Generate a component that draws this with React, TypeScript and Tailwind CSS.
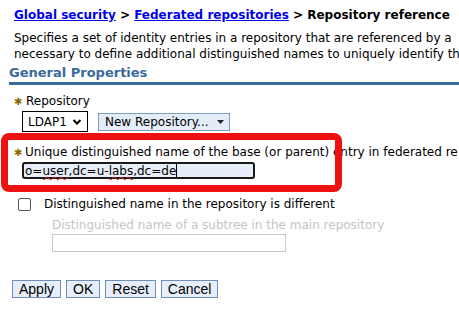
import React from "react";

const F = { fontFamily: '"DejaVu Sans", Verdana, sans-serif' };

export default function App() {
  return (
    <div className="relative w-[459px] h-[317px] bg-white overflow-hidden text-[12px] text-black" style={F}>
      <div className="pl-[14px] pt-[6px] font-bold text-[12px] whitespace-nowrap leading-[18px]">
        <a className="text-[#0000ee] underline">Global security</a> &gt;{" "}
        <a className="text-[#0000ee] underline">Federated repositories</a> &gt; Repository reference
      </div>
      <div className="pl-[14px] pt-[6px] leading-[16px] whitespace-nowrap">
        <div>Specifies a set of identity entries in a repository that are referenced by a</div>
        <div>necessary to define additional distinguished names to uniquely identify th</div>
      </div>
      <div className="ml-[9px] mt-[3px] border-b-[3px] border-[#3a6a9c] text-[#3a6a9c] font-bold text-[13px] leading-[16px] pb-[1px]">
        General Properties
      </div>
      <div className="pl-[14px] pt-[9px]">
        <div className="flex items-center leading-[15px]">
          <span className="text-[#8a6a00] w-[12px] text-[10px]">✱</span>
          <span>Repository</span>
        </div>
        <div className="flex items-center mt-[2px] ml-[8px]">
          <div className="w-[66px] h-[21px] border border-black flex items-center justify-between px-[5px]">
            <span>LDAP1</span>
            <svg width="10" height="8" viewBox="0 0 10 8"><path d="M1.5 2 L5 5.5 L8.5 2" stroke="black" strokeWidth="2" fill="none" /></svg>
          </div>
          <div className="ml-[10px] h-[18px] w-[132px] border border-[#7c9cc4] bg-[#e4ecf8] flex items-center pl-[6px] gap-[8px] text-[12px]">
            <span>New Repository...</span>
            <svg width="7" height="4" viewBox="0 0 7 4"><path d="M0 0 H7 L3.5 4 Z" fill="#222" /></svg>
          </div>
        </div>
        <div className="flex items-center leading-[15px] mt-[13px] whitespace-nowrap">
          <span className="text-[#8a6a00] w-[11px] text-[10px]">✱</span>
          <span>Unique distinguished name of the base (or parent) entry in federated re</span>
        </div>
        <div className="ml-[8px] mt-[2px] w-[233px] h-[17px] border-2 border-[#1a1a1a] rounded-[3px] bg-[#e8eef9] flex items-center px-[1px] text-[12px]">
          <span>o=</span>
          <span className="underline decoration-wavy decoration-[#e02020] decoration-1">user</span>
          <span>,dc=u-</span>
          <span className="underline decoration-wavy decoration-[#e02020] decoration-1">labs</span>
          <span>,dc=de</span>
          <span className="w-px h-[13px] bg-black"></span>
        </div>
        <div className="flex items-center mt-[18px] leading-[15px]">
          <div className="w-[13px] h-[13px] border border-[#555] rounded-[2px] ml-[4px] mr-[13px] bg-white"></div>
          <span>Distinguished name in the repository is different</span>
        </div>
        <div className="ml-[38px] mt-[6px] text-[#c4c4c4] leading-[15px] whitespace-nowrap">
          Distinguished name of a subtree in the main repository
        </div>
        <div className="ml-[38px] mt-[1px] w-[234px] h-[18px] border border-[#c8c8c8]"></div>
      </div>
      <div className="flex gap-[5px] pl-[12px] mt-[28px] text-[14px]" style={{ fontFamily: '"Liberation Sans", Arial, sans-serif' }}>
        {["Apply", "OK", "Reset", "Cancel"].map((b) => (
          <div key={b} className="h-[18px] px-[6px] border border-[#6f8fb8] bg-[#e6eefb] flex items-center leading-none">{b}</div>
        ))}
      </div>
      <div className="absolute left-[1px] top-[133px] w-[341px] h-[59px] border-[7px] border-[#ee1111] rounded-[8px]"></div>
    </div>
  );
}
